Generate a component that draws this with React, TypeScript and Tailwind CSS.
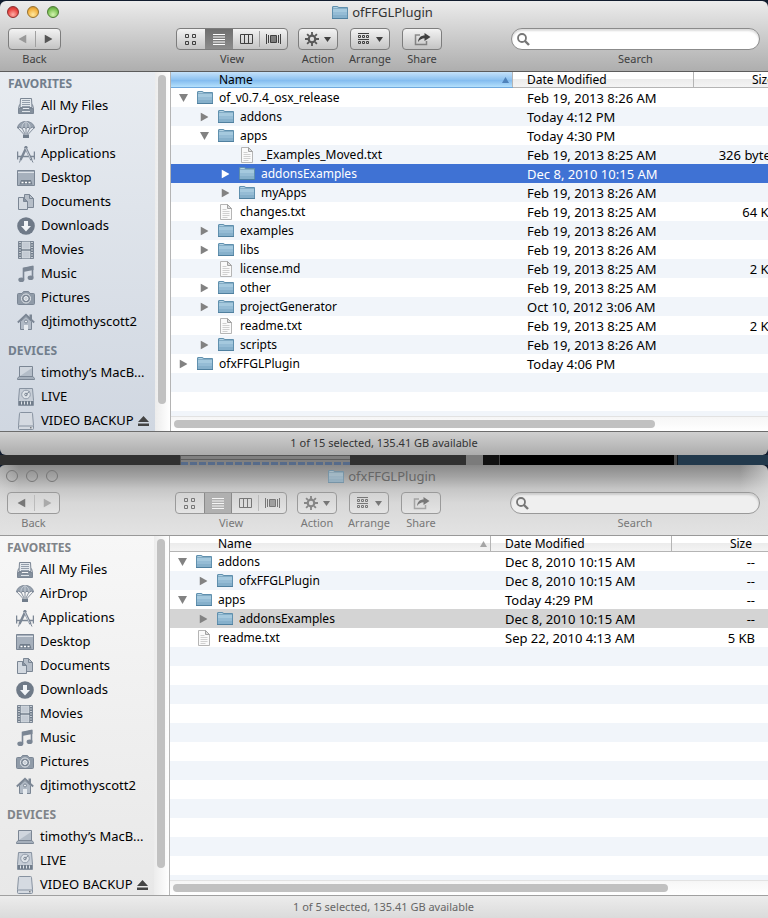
import type { ReactNode } from "react";

interface FileRow {
  name: string;
  kind: "folder" | "file";
  level: number;
  open?: boolean;
  date: string;
  size: string;
  selected?: boolean;
}

interface WindowProps {
  title: string;
  active: boolean;
  rows: FileRow[];
  blankRows: number;
  status: string;
}

const releaseRows: FileRow[] = [
  { name: "of_v0.7.4_osx_release", kind: "folder", level: 0, open: true, date: "Feb 19, 2013 8:26 AM", size: "--" },
  { name: "addons", kind: "folder", level: 1, date: "Today 4:12 PM", size: "--" },
  { name: "apps", kind: "folder", level: 1, open: true, date: "Today 4:30 PM", size: "--" },
  { name: "_Examples_Moved.txt", kind: "file", level: 2, date: "Feb 19, 2013 8:25 AM", size: "326 bytes" },
  { name: "addonsExamples", kind: "folder", level: 2, date: "Dec 8, 2010 10:15 AM", size: "--", selected: true },
  { name: "myApps", kind: "folder", level: 2, date: "Feb 19, 2013 8:26 AM", size: "--" },
  { name: "changes.txt", kind: "file", level: 1, date: "Feb 19, 2013 8:25 AM", size: "64 KB" },
  { name: "examples", kind: "folder", level: 1, date: "Feb 19, 2013 8:26 AM", size: "--" },
  { name: "libs", kind: "folder", level: 1, date: "Feb 19, 2013 8:26 AM", size: "--" },
  { name: "license.md", kind: "file", level: 1, date: "Feb 19, 2013 8:25 AM", size: "2 KB" },
  { name: "other", kind: "folder", level: 1, date: "Feb 19, 2013 8:25 AM", size: "--" },
  { name: "projectGenerator", kind: "folder", level: 1, date: "Oct 10, 2012 3:06 AM", size: "--" },
  { name: "readme.txt", kind: "file", level: 1, date: "Feb 19, 2013 8:25 AM", size: "2 KB" },
  { name: "scripts", kind: "folder", level: 1, date: "Feb 19, 2013 8:26 AM", size: "--" },
  { name: "ofxFFGLPlugin", kind: "folder", level: 0, date: "Today 4:06 PM", size: "--" },
];

const pluginRows: FileRow[] = [
  { name: "addons", kind: "folder", level: 0, open: true, date: "Dec 8, 2010 10:15 AM", size: "--" },
  { name: "ofxFFGLPlugin", kind: "folder", level: 1, date: "Dec 8, 2010 10:15 AM", size: "--" },
  { name: "apps", kind: "folder", level: 0, open: true, date: "Today 4:29 PM", size: "--" },
  { name: "addonsExamples", kind: "folder", level: 1, date: "Dec 8, 2010 10:15 AM", size: "--", selected: true },
  { name: "readme.txt", kind: "file", level: 0, date: "Sep 22, 2010 4:13 AM", size: "5 KB" },
];

const indents = ["pl-1.5", "pl-[27px]", "pl-12"];

export default function App() {
  return (
    <main
      className="max-h-screen overflow-hidden bg-[#111c2e] pt-px text-black"
      style={{ fontFamily: '"Noto Sans", "Open Sans", sans-serif' }}
    >
      <FinderWindow
        title="ofFFGLPlugin"
        active
        rows={releaseRows}
        blankRows={3}
        status="1 of 15 selected, 135.41 GB available"
      />
      <DesktopStrip />
      <FinderWindow
        title="ofxFFGLPlugin"
        active={false}
        rows={pluginRows}
        blankRows={13}
        status="1 of 5 selected, 135.41 GB available"
      />
    </main>
  );
}

/* ---------------- Window ---------------- */

function FinderWindow({ title, active, rows, blankRows, status }: WindowProps) {
  return (
    <section className={active ? "overflow-hidden rounded-md" : "-ml-px overflow-hidden rounded-t-md"}>
      <Toolbar title={title} active={active} />

      <div className="flex h-[359px]">
        <Sidebar active={active} />
        <FileList active={active} rows={rows} blankRows={blankRows} />
      </div>

      <footer
        className={
          active
            ? "flex h-6 items-center justify-center border-t border-[#6c6c6c] bg-linear-to-b from-[#d0d0d0] to-[#acacac] text-[11px] text-[#333]"
            : "flex h-6 items-center justify-center border-t border-[#a0a0a0] bg-linear-to-b from-[#ececec] to-[#dadada] text-[11px] text-[#666]"
        }
      >
        {status}
      </footer>
    </section>
  );
}

/* the desktop that shows between the two windows */
function DesktopStrip() {
  return (
    <div className="flex h-[10px] bg-[#10161c]">
      <div className="w-[180px] bg-[#303030]" />
      <div className="flex w-[170px] flex-col justify-end border-l border-t border-[#555] bg-[#808080]">
        <div className="h-px bg-[#5c5c5c]" />
        <div className="mt-[2px] h-[3px] bg-[repeating-linear-gradient(90deg,#566b8a_0_7px,#828282_7px_9px)]" />
      </div>
      <div className="w-[116px] bg-[#303030]" />
      <div className="w-[17px] bg-[#7b7b7b]" />
      <div className="w-4 bg-[#111]" />
      <div className="w-px bg-[#444]" />
      <div className="w-[174px] bg-black" />
      <div className="w-[3px] bg-[#4a4a4a]" />
      <div className="ml-px flex-1 bg-[#22394c]" />
    </div>
  );
}

/* ---------------- Toolbar ---------------- */

function Toolbar({ title, active }: { title: string; active: boolean }) {
  const lights = active
    ? [
        "border-[#8d2c2c] bg-[radial-gradient(circle_at_50%_75%,#ffb0a8,#e8433f_60%,#b5302e)]",
        "border-[#96702b] bg-[radial-gradient(circle_at_50%_75%,#ffe9a0,#f3b13e_60%,#bf8327)]",
        "border-[#4b7a32] bg-[radial-gradient(circle_at_50%_75%,#d5f5b0,#7cc254_60%,#518f37)]",
      ]
    : ["border-[#777] bg-transparent", "border-[#777] bg-transparent", "border-[#777] bg-transparent"];
  const ink = active ? "text-[#404040]" : "text-[#777]";

  return (
    <header
      className={
        active
          ? "border-b border-[#5c5c5c] bg-linear-to-b from-[#ececec] to-[#aeaeae]"
          : "border-b border-[#999] bg-[linear-gradient(to_left,#e0e0e099,#e0e0e000_28px),linear-gradient(to_right,#e0e0e066,#e0e0e000_20px),linear-gradient(to_bottom,#888_0,#a4a4a4_12px,#c6c6c6_24px,#d8d8d8_38px,#e3e3e3_70px)]"
      }
    >
      <div className="grid h-[27px] grid-cols-[1fr_auto_1fr] pl-[7px] pr-2.5">
        <div className="flex gap-2 pt-[5px]">
          {["Close", "Minimize", "Zoom"].map((label, i) => (
            <button key={label} aria-label={label} className={`size-3 rounded-full border ${lights[i]}`} />
          ))}
        </div>
        <div className={`flex h-[23px] items-center gap-1 text-[13px] ${active ? "text-[#333]" : "text-[#666]"}`}>
          <FolderIcon className={active ? "h-[15px] w-4" : "h-[15px] w-4 opacity-60"} />
          <h1>{title}</h1>
        </div>
      </div>

      <div className={`flex h-[43px] px-2 text-[11px] leading-4 ${ink}`}>
        <Tool label="Back">
          <Group active={active}>
            <button aria-label="Back" className="flex w-[26px] items-center justify-center">
              <Arrow className={active ? "h-2 w-[9px] rotate-90 text-[#999]" : "h-2 w-[9px] rotate-90 text-[#777]"} />
            </button>
            <Divider active={active} />
            <button aria-label="Forward" className="flex w-6 items-center justify-center">
              <Arrow className={active ? "h-2 w-[9px] -rotate-90 text-[#555]" : "h-2 w-[9px] -rotate-90 text-[#aaa]"} />
            </button>
          </Group>
        </Tool>

        <div className="ml-[115px] mr-[10px]">
          <Tool label="View">
            <Group active={active}>
              <button aria-label="Icon view" className="flex w-7 items-center justify-center">
                <GridGlyph />
              </button>
              <button
                aria-label="List view"
                className={
                  active
                    ? "flex w-7 items-center justify-center bg-linear-to-b from-[#6e6e6e] to-[#8c8c8c] text-white"
                    : "flex w-7 items-center justify-center border-x border-[#8a8a8a] bg-[#b0b0b0] text-[#f5f5f5]"
                }
              >
                <ListGlyph />
              </button>
              <button aria-label="Column view" className="flex w-[26px] items-center justify-center">
                <ColumnsGlyph />
              </button>
              <Divider active={active} />
              <button aria-label="Cover flow" className="flex w-[27px] items-center justify-center">
                <CoverGlyph />
              </button>
            </Group>
          </Tool>
        </div>

        <div className="flex gap-3">
          <Tool label="Action">
            <Group active={active}>
              <button aria-label="Action" className="flex w-[38px] items-center justify-center gap-[5px]">
                <GearGlyph />
                <Arrow className="h-[5px] w-[7px]" />
              </button>
            </Group>
          </Tool>
          <Tool label="Arrange">
            <Group active={active}>
              <button aria-label="Arrange" className="flex w-[38px] items-center justify-center gap-[7px]">
                <ArrangeGlyph />
                <Arrow className="h-[5px] w-[7px]" />
              </button>
            </Group>
          </Tool>
          <Tool label="Share">
            <Group active={active}>
              <button aria-label="Share" className="flex w-[38px] items-center justify-center">
                <ShareGlyph />
              </button>
            </Group>
          </Tool>
        </div>

        <div className="ml-[69px] flex flex-1 flex-col items-center">
          <div
            className={
              active
                ? "flex h-[22px] w-full items-center rounded-full border border-[#8b8b8b] bg-white pl-[5px] shadow-[inset_0_2px_2px_#ddd]"
                : "flex h-[22px] w-full items-center rounded-full border border-[#999] bg-[#efefef] pl-[5px] shadow-[inset_0_2px_2px_#ccc]"
            }
          >
            <SearchGlyph />
            <input id={`search-${title}`} type="search" className="ml-1 min-w-0 flex-1 outline-none" />
          </div>
          <label htmlFor={`search-${title}`} className="mt-px">
            Search
          </label>
        </div>
      </div>
    </header>
  );
}

function Tool({ label, children }: { label: string; children: ReactNode }) {
  return (
    <div className="flex flex-col items-center">
      {children}
      <span className="-mx-2 mt-px">{label}</span>
    </div>
  );
}

function Group({ active, children }: { active: boolean; children: ReactNode }) {
  return (
    <div
      className={
        active
          ? "flex h-[22px] overflow-hidden rounded border border-[#7d7d7d] bg-linear-to-b from-[#f3f3f3] to-[#c4c4c4]"
          : "flex h-[22px] overflow-hidden rounded border border-[#9a9a9a] bg-linear-to-b from-[#d3d3d3] to-[#e4e4e4]"
      }
    >
      {children}
    </div>
  );
}

function Divider({ active }: { active: boolean }) {
  return <span className={active ? "my-0.5 w-px bg-[#a0a0a0]" : "my-0.5 w-px bg-[#bbb]"} />;
}

/* ---------------- Sidebar ---------------- */

function Sidebar({ active }: { active: boolean }) {
  const favorites = [
    { label: "All My Files", icon: <AllFilesIcon /> },
    { label: "AirDrop", icon: <AirDropIcon /> },
    { label: "Applications", icon: <ApplicationsIcon /> },
    { label: "Desktop", icon: <DesktopIcon /> },
    { label: "Documents", icon: <DocumentsIcon /> },
    { label: "Downloads", icon: <DownloadsIcon /> },
    { label: "Movies", icon: <MoviesIcon /> },
    { label: "Music", icon: <MusicIcon /> },
    { label: "Pictures", icon: <PicturesIcon /> },
    { label: "djtimothyscott2", icon: <HomeIcon /> },
  ];

  return (
    <aside className={active ? "flex w-[171px] shrink-0 border-r border-[#b4b4b4]" : "flex w-[171px] shrink-0 border-r border-[#b9b9b9]"}>
      <nav
        className={
          active
            ? "min-w-0 flex-1 overflow-hidden bg-linear-to-b from-[#e8ecf1] to-[#d0d7e1] text-[#727e8c]"
            : "min-w-0 flex-1 overflow-hidden bg-linear-to-b from-[#f7f7f7] to-[#e8e8e8] text-[#808489]"
        }
      >
        <h2 className="h-[22px] pl-2 pt-1 text-[12px] font-bold leading-4">FAVORITES</h2>
        {favorites.map((item) => (
          <SidebarItem key={item.label} icon={item.icon} label={item.label} />
        ))}
        <h2 className="h-[27px] pl-2 pt-[9px] text-[12px] font-bold leading-4">DEVICES</h2>
        <SidebarItem icon={<LaptopIcon />} label="timothy’s MacB..." />
        <SidebarItem icon={<HardDiskIcon />} label="LIVE" />
        <SidebarItem icon={<DriveIcon />} label="VIDEO BACKUP" eject />
      </nav>
      <div className="w-[15px] bg-linear-to-r from-[#ececec] to-white px-[3px] pt-[3px]">
        <div className="h-[329px] w-2 rounded-full bg-[#c1c1c1]" />
      </div>
    </aside>
  );
}

function SidebarItem({ icon, label, eject }: { icon: ReactNode; label: string; eject?: boolean }) {
  return (
    <div className="flex h-6 items-center pl-[17px]">
      <a href="#" className="flex items-center gap-1.5 whitespace-nowrap text-[13px] text-black">
        {icon}
        {label}
      </a>
      {eject && (
        <button aria-label="Eject" className="ml-1">
          <svg width="11" height="10" viewBox="0 0 11 10" fill="#444">
            <path d="M5.5 0 11 6H0zM0 7.500h11V10H0z" />
          </svg>
        </button>
      )}
    </div>
  );
}

/* ---------------- File list ---------------- */

function FileList({ active, rows, blankRows }: { active: boolean; rows: FileRow[]; blankRows: number }) {
  const head = "h-4 border-b p-0 font-normal";

  return (
    <div className="flex min-w-0 flex-1 flex-col bg-white">
      <div className="flex-1 overflow-hidden">
        <table className={active ? "w-full min-w-[619px] table-fixed border-separate border-spacing-0 text-left" : "w-full table-fixed border-separate border-spacing-0 text-left"}>
          <colgroup>
            <col className={active ? "w-[342px]" : "w-[321px]"} />
            <col className="w-[181px]" />
            <col />
          </colgroup>
          <thead className="text-[12px] leading-[15px]">
            <tr>
              <th
                className={
                  active
                    ? `${head} border-[#6fa9de] bg-[linear-gradient(to_bottom,#c5e2fa,#8fc3f1_50%,#7fb9ee_52%,#b4e0fc)] pl-12`
                    : `${head} border-[#b4b4b4] bg-[linear-gradient(to_bottom,#fff_50%,#ececec_50%,#f4f4f4)] pl-12`
                }
              >
                <div className="flex items-center justify-between border-r border-[#b5b5b5] pr-[3px]">
                  Name
                  <Arrow className={active ? "h-1.5 w-[7px] rotate-180 text-[#4f83bb]" : "h-1.5 w-[7px] rotate-180 text-[#a5a5a5]"} />
                </div>
              </th>
              <th className={`${head} border-[#b4b4b4] bg-[linear-gradient(to_bottom,#fff_50%,#ececec_50%,#f4f4f4)] pl-[14px]`}>
                <div className="border-r border-[#b5b5b5]">Date Modified</div>
              </th>
              <th className={`${head} border-[#b4b4b4] bg-[linear-gradient(to_bottom,#fff_50%,#ececec_50%,#f4f4f4)] pr-4 text-right`}>Size</th>
            </tr>
          </thead>
          <tbody>
            {rows.map((row, i) => (
              <ListRow key={i} row={row} active={active} />
            ))}
            {Array.from({ length: blankRows }, (_, i) => (
              <tr key={`blank-${i}`} className="h-[19px] even:bg-[#f1f5fa]">
                <td colSpan={3} className="p-0" />
              </tr>
            ))}
          </tbody>
        </table>
      </div>

      <div className="h-[15px] border-t border-[#e2e2e2] bg-linear-to-b from-[#f6f6f6] to-white px-[3px] pt-[3px]">
        <div className={active ? "h-2 w-[481px] rounded-full bg-[#c1c1c1]" : "h-2 w-[495px] rounded-full bg-[#c1c1c1]"} />
      </div>
    </div>
  );
}

function ListRow({ row, active }: { row: FileRow; active: boolean }) {
  let tone = "even:bg-[#f1f5fa]";
  if (row.selected) tone = active ? "bg-[#3f72d4] text-white" : "bg-[#d4d4d4]";

  return (
    <tr className={`h-[19px] whitespace-nowrap leading-[18px] ${tone}`}>
      <td className={`p-0 text-[12px] ${indents[row.level]}`}>
        <div className="flex items-center">
          <span className="mr-2 w-3">
            {row.kind === "folder" && (
              <button aria-label={row.open ? "Collapse" : "Expand"} className="flex size-3 items-center justify-center">
                <Arrow
                  className={`h-2 w-[9px] ${row.open ? "" : "-rotate-90"} ${row.selected && active ? "text-white" : "text-[#828282]"}`}
                />
              </button>
            )}
          </span>
          {row.kind === "folder" ? <FolderIcon className="h-[15px] w-4" /> : <FileIcon />}
          <span className="ml-1.5">{row.name}</span>
        </div>
      </td>
      <td className="p-0 pl-[14px] text-[13px]">{row.date}</td>
      <td className="p-0 pr-[13px] text-right text-[13px]">{row.size}</td>
    </tr>
  );
}

/* ---------------- Glyphs ---------------- */

function Arrow({ className }: { className: string }) {
  return (
    <svg viewBox="0 0 9 8" preserveAspectRatio="none" className={className} fill="currentColor">
      <path d="M0 0h9L4.500 8z" />
    </svg>
  );
}

function GridGlyph() {
  return (
    <svg width="12" height="11" viewBox="0 0 12 11" fill="none" stroke="currentColor">
      <path d="M.5.5h3v3h-3zM7.500.5h3v3h-3zM.5 7.500h3v3h-3zM7.500 7.500h3v3h-3z" />
    </svg>
  );
}

function ListGlyph() {
  return (
    <svg width="12" height="11" viewBox="0 0 12 11" stroke="currentColor">
      <path d="M0 .5h12M0 3h12M0 5.500h12M0 8h12M0 10.500h12" />
    </svg>
  );
}

function ColumnsGlyph() {
  return (
    <svg width="13" height="10" viewBox="0 0 13 10" fill="none" stroke="currentColor">
      <path d="M.5.5h12v9H.5zM4.500.5v9M8.500.5v9" />
    </svg>
  );
}

function CoverGlyph() {
  return (
    <svg width="15" height="10" viewBox="0 0 15 10" fill="none" stroke="currentColor">
      <path d="M.5 0v10M2.500 1v8M12.500 1v8M14.500 0v10" />
      <path d="M4.500 1.500h6v7h-6z" fill="currentColor" fillOpacity=".6" />
    </svg>
  );
}

function GearGlyph() {
  return (
    <svg width="14" height="14" viewBox="0 0 14 14" fill="none" stroke="currentColor" opacity=".85">
      <circle cx="7" cy="7" r="3.300" strokeWidth="2.200" />
      <path strokeWidth="1.800" d="M7 0v3M7 11v3M0 7h3M11 7h3M2.100 2.100l2 2M9.900 9.900l2 2M2.100 11.900l2-2M9.900 4.100l2-2" />
    </svg>
  );
}

function ArrangeGlyph() {
  return (
    <svg width="11" height="12" viewBox="0 0 11 12" fill="none" stroke="currentColor">
      <path d="M0 .5h11M0 6.500h11" />
      <path d="M.5 2.500h2v2h-2zM4.500 2.500h2v2h-2zM8.500 2.500h2v2h-2zM.5 8.500h2v2h-2zM4.500 8.500h2v2h-2zM8.500 8.500h2v2h-2z" />
    </svg>
  );
}

function ShareGlyph() {
  return (
    <svg width="17" height="14" viewBox="0 0 17 14" fill="none" stroke="currentColor">
      <path d="M6 3H1.500v9.500h11V9" strokeWidth="1.500" opacity=".55" />
      <path d="M4 10C4.500 5.500 7 3.500 10.500 3.500V1l6 4-6 4V6.300C8 6.300 6 7.500 4 10z" fill="currentColor" stroke="none" />
    </svg>
  );
}

function SearchGlyph() {
  return (
    <svg width="13" height="13" viewBox="0 0 13 13" fill="none" stroke="#777" strokeWidth="1.800">
      <circle cx="5" cy="5" r="4" />
      <path d="m8 8 4 4" strokeWidth="2.400" />
    </svg>
  );
}

function FolderIcon({ className }: { className: string }) {
  return (
    <svg viewBox="0 0 16 15" className={`shrink-0 ${className}`}>
      <path d="M.5 2Q.5 1.500 1 1.500h4.500q.8 0 1 1h9v11H.5z" fill="#84adc6" stroke="#6090ae" />
      <path d="M1 4h14v9H1z" fill="#86b0cb" />
      <path d="M1 4h14v3H1z" fill="#a5c9de" />
      <path d="M1 7h14v3H1z" fill="#95bcd5" />
      <path d="M1.500 2.500h4" stroke="#b3d2e3" />
      <path d="M0 13.500h16" stroke="#50809f" />
    </svg>
  );
}

function FileIcon() {
  return (
    <svg viewBox="0 0 16 16" className="size-4 shrink-0">
      <path d="M2.500.5h7l4 4v11h-11z" fill="#fafafa" stroke="#b5b5b5" />
      <path d="M9.500.5v4h4z" fill="#ddd" stroke="#a3a3a3" />
      <path d="M4.500 5.500h4M4.500 7.500h7M4.500 9.500h7M4.500 11.500h7M4.500 13.500h5" stroke="#d0d0d0" />
    </svg>
  );
}

/* ---------------- Sidebar icons ---------------- */

function SideIcon({ children }: { children: ReactNode }) {
  return (
    <svg width="18" height="18" viewBox="0 0 18 18" fill="none" stroke="#7b8694" className="shrink-0">
      {children}
    </svg>
  );
}

function AllFilesIcon() {
  return (
    <SideIcon>
      <path d="M3.500 1.500h11l.5 9H3z" fill="#e3e8ed" />
      <path d="M5 3.500h8M5 5.500h8M5 7.500h8M5 9.500h8" stroke="#939eab" />
      <path d="m2.500 7.500-1 4M15.500 7.500l1 4" />
      <path d="M1.500 11.500h4l1 1h5l1-1h4v5h-15z" fill="#84909d" />
      <path d="M5 14.500h8" stroke="#dfe4e9" />
    </SideIcon>
  );
}

function AirDropIcon() {
  return (
    <SideIcon>
      <path d="M.5 7C1 3 4.500.5 9 .5S17 3 17.500 7l-2-.8-2.500 1-2-.9L9 7.200l-2-.9-2 .9-2.500-1z" fill="#98a3b0" />
      <path d="M9 .5C5 3 5 5 5 7M9 .5c4 2.500 4 4.500 4 6.500M9 1v6" stroke="#dde2e8" strokeWidth=".7" />
      <path d="m1 7 6 6.500M5 7l3 6M13 7l-3 6M17 7l-6 6.500M9 7v6" strokeWidth=".9" />
      <path d="M6 13.500h6V17H6z" fill="#717d8b" stroke="none" />
    </SideIcon>
  );
}

function ApplicationsIcon() {
  return (
    <SideIcon>
      <path d="M.5 6.500v8M17.500 6.500v8M.5 11.500h17" strokeWidth="1.500" />
      <path d="M9.800 1.500 3.500 15M8 1.500 14.500 15" strokeWidth="2.400" />
      <path d="m8.500 3 5 11" stroke="#dbe0e7" strokeWidth=".8" />
      <path d="m3.500 14.500-1 3M14.500 14.500l1.500 3" />
    </SideIcon>
  );
}

function DesktopIcon() {
  return (
    <SideIcon>
      <path d="M.5 1.500h17v15H.5z" fill="#a6b0bc" />
      <path d="M1 3.500h16" stroke="#dce1e7" />
      <path d="M2.500 15.500 4 11h10l1.500 4.500z" fill="#717d8b" stroke="none" />
      <path d="M4.500 13.500h2M8 13.500h2M11.500 13.500h2" stroke="#fff" strokeWidth="1.500" />
    </SideIcon>
  );
}

function DocumentsIcon() {
  return (
    <SideIcon>
      <path d="M7.500 1.500h5l4 4v9h-9z" fill="#b6bec8" />
      <path d="M12.500 1.500v4h4" />
      <path d="M1.500 4.500h5l4 4v8h-9z" fill="#d3d9e0" />
      <path d="M6.500 4.500v4h4z" fill="#8792a0" />
    </SideIcon>
  );
}

function DownloadsIcon() {
  return (
    <SideIcon>
      <circle cx="9" cy="9" r="8.800" fill="#6f7a88" stroke="none" />
      <path d="M7 4h4v5h3l-5 5.500L4 9h3z" fill="#f2f5f8" stroke="none" />
    </SideIcon>
  );
}

function MoviesIcon() {
  return (
    <SideIcon>
      <path d="M1.500.5h15v17h-15z" fill="#717d8b" />
      <path d="M3 1v16M15 1v16" stroke="#e4e8ed" strokeDasharray="1 1.500" strokeWidth="1.500" />
      <path d="M5 1h8v7H5zM5 10h8v7H5z" fill="#c4cbd4" stroke="#e4e8ed" strokeWidth=".5" />
    </SideIcon>
  );
}

function MusicIcon() {
  return (
    <SideIcon>
      <path d="M6.500 14.500V3.500l9-2v11" strokeWidth="1.600" />
      <path d="M6 3l10.500-2v4L6 7z" fill="#7b8694" stroke="none" />
      <ellipse cx="4.300" cy="14.800" rx="3" ry="2.300" fill="#7b8694" stroke="none" />
      <ellipse cx="13.600" cy="12.800" rx="3" ry="2.300" fill="#7b8694" stroke="none" />
    </SideIcon>
  );
}

function PicturesIcon() {
  return (
    <SideIcon>
      <path d="M1.500 4.500h3.500l1.500-2h5l1.500 2h3.500q1 0 1 1v9q0 1-1 1h-15q-1 0-1-1v-9q0-1 1-1z" fill="#909ba8" />
      <circle cx="9" cy="9.500" r="4.500" fill="#7b8694" stroke="#e8ecf0" />
      <circle cx="9" cy="9.500" r="2" fill="#c7ced6" stroke="#eef1f4" />
    </SideIcon>
  );
}

function HomeIcon() {
  return (
    <SideIcon>
      <path d="M12.500 1.500H15V7h-2.500z" fill="#7b8694" stroke="none" />
      <path d="M3.500 8.500 9 3.500l5.500 5v8h-11z" fill="#b2bbc6" />
      <path d="M.8 9.500 9 1.800l8.200 7.700" strokeWidth="1.800" />
      <path d="M7 17v-5h4v5z" fill="#e8ecf0" stroke="none" />
      <circle cx="9" cy="8.500" r="1.500" fill="#e8ecf0" />
    </SideIcon>
  );
}

function LaptopIcon() {
  return (
    <SideIcon>
      <path d="M2.500 2.500h13v10h-13z" fill="#d0d6de" />
      <path d="m3 12 12-8v8z" fill="#b3bcc7" stroke="none" />
      <path d="M2 12.500h14l1.500 2v1H.5v-1z" fill="#a5afbb" />
    </SideIcon>
  );
}

function HardDiskIcon() {
  return (
    <SideIcon>
      <path d="M2.500.5h13l1 12v5h-15v-5z" fill="#c7ced7" stroke="#8792a0" />
      <circle cx="9" cy="6.500" r="4.300" fill="#dfe4e9" stroke="#929dab" />
      <circle cx="9" cy="6.500" r="1.300" />
      <path d="m9 6.500 3.500-3" />
      <path d="M2 13h14v4H2z" fill="#717d8b" stroke="none" />
      <path d="M4.500 13.500v3M7.500 13.500v3M10.500 13.500v3M13.500 13.500v3" stroke="#dfe4e9" />
    </SideIcon>
  );
}

function DriveIcon() {
  return (
    <SideIcon>
      <path d="M3.500.5h11q1 0 1 1l1 12v3q0 1-1 1h-13q-1 0-1-1v-3l1-12q0-1 1-1z" fill="#d5dae1" stroke="#8792a0" />
      <path d="M1.500 14h15" stroke="#8792a0" />
      <path d="M13 15.800h1.500" stroke="#555" />
    </SideIcon>
  );
}
